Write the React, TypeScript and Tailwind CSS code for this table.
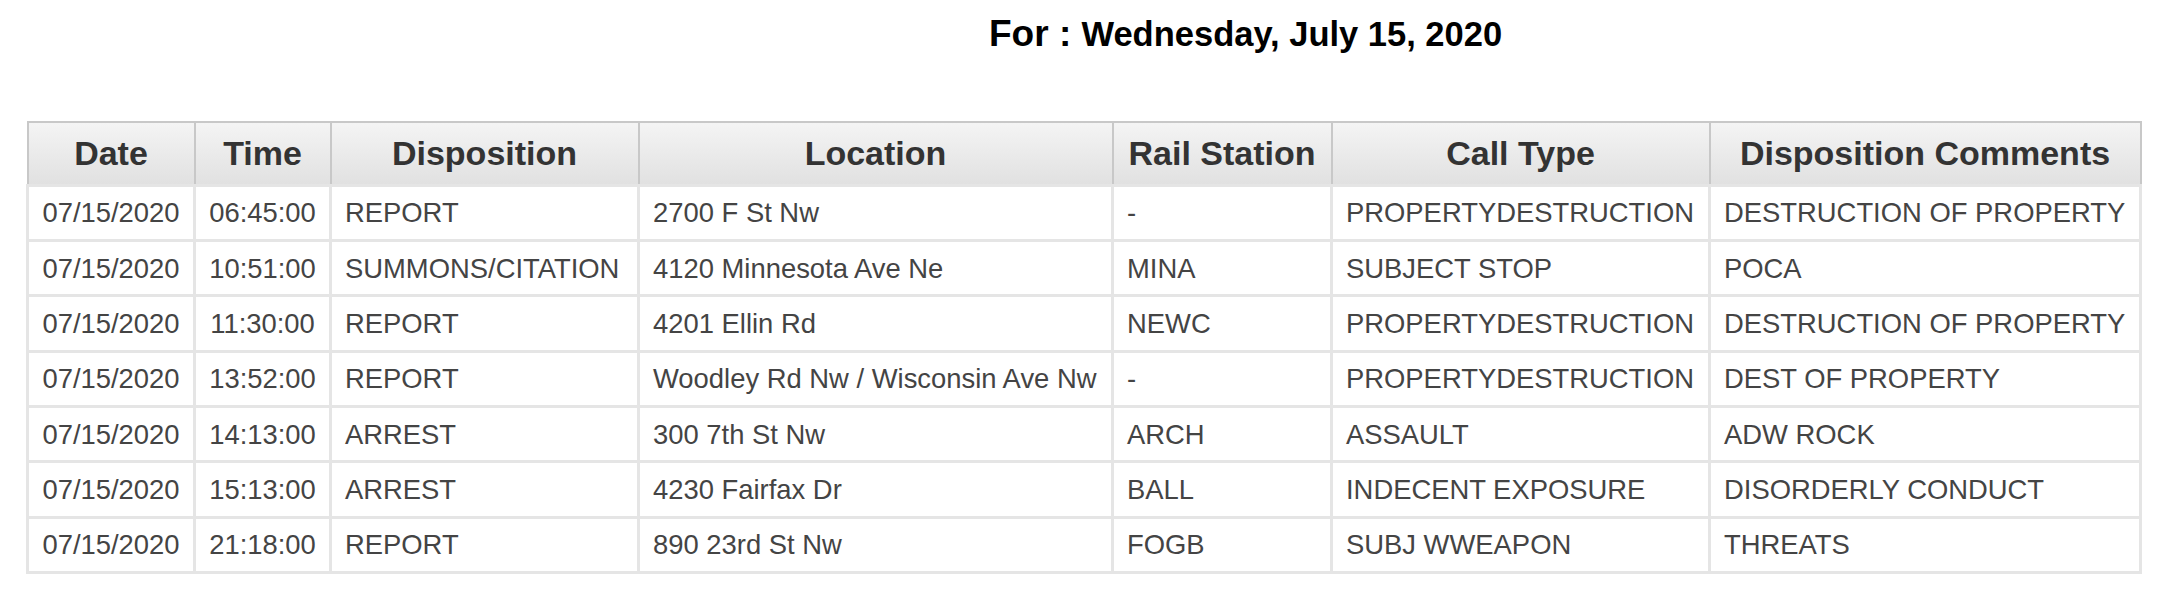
import React from "react";

const rows = [
  ["07/15/2020", "06:45:00", "REPORT", "2700 F St Nw", "-", "PROPERTYDESTRUCTION", "DESTRUCTION OF PROPERTY"],
  ["07/15/2020", "10:51:00", "SUMMONS/CITATION", "4120 Minnesota Ave Ne", "MINA", "SUBJECT STOP", "POCA"],
  ["07/15/2020", "11:30:00", "REPORT", "4201 Ellin Rd", "NEWC", "PROPERTYDESTRUCTION", "DESTRUCTION OF PROPERTY"],
  ["07/15/2020", "13:52:00", "REPORT", "Woodley Rd Nw / Wisconsin Ave Nw", "-", "PROPERTYDESTRUCTION", "DEST OF PROPERTY"],
  ["07/15/2020", "14:13:00", "ARREST", "300 7th St Nw", "ARCH", "ASSAULT", "ADW ROCK"],
  ["07/15/2020", "15:13:00", "ARREST", "4230 Fairfax Dr", "BALL", "INDECENT EXPOSURE", "DISORDERLY CONDUCT"],
  ["07/15/2020", "21:18:00", "REPORT", "890 23rd St Nw", "FOGB", "SUBJ WWEAPON", "THREATS"],
];

const headers = ["Date", "Time", "Disposition", "Location", "Rail Station", "Call Type", "Disposition Comments"];
const widths = [167, 136, 308, 474, 219, 378, 431];

export default function App() {
  return (
    <div
      className="w-[2172px] h-[610px] bg-white"
      style={{ fontFamily: '"Liberation Sans", Arial, Helvetica, sans-serif' }}
    >
      <div className="pt-[12px] pl-[989px] h-[121px] text-black font-bold whitespace-nowrap">
        <span className="text-[37px] leading-[44px]">For : </span>
        <span className="text-[34.5px] leading-[44px]">Wednesday, July 15, 2020</span>
      </div>
      <div className="pl-[26px]">
        <table className="table-fixed border-collapse w-[2116px]">
          <colgroup>
            {widths.map((w, i) => (
              <col key={i} style={{ width: w }} />
            ))}
          </colgroup>
          <thead>
            <tr className="h-[63px]">
              {headers.map((h) => (
                <th
                  key={h}
                  className="border-[2px] border-[#c8c8c8] bg-gradient-to-b from-[#f4f4f4] to-[#e1e1e1] text-[34px] font-bold text-[#333333] text-center align-middle p-0 whitespace-nowrap"
                >
                  {h}
                </th>
              ))}
            </tr>
          </thead>
          <tbody>
            {rows.map((r, ri) => (
              <tr key={ri} className="h-[55.4px]">
                {r.map((c, ci) => (
                  <td
                    key={ci}
                    className={`border-[3px] border-[#e5e5e5] text-[27.4px] text-[#444444] align-middle py-0 whitespace-nowrap ${
                      ci < 2 ? "text-center px-0" : "text-left pl-[13px] pr-0"
                    }`}
                  >
                    {c}
                  </td>
                ))}
              </tr>
            ))}
          </tbody>
        </table>
      </div>
    </div>
  );
}
